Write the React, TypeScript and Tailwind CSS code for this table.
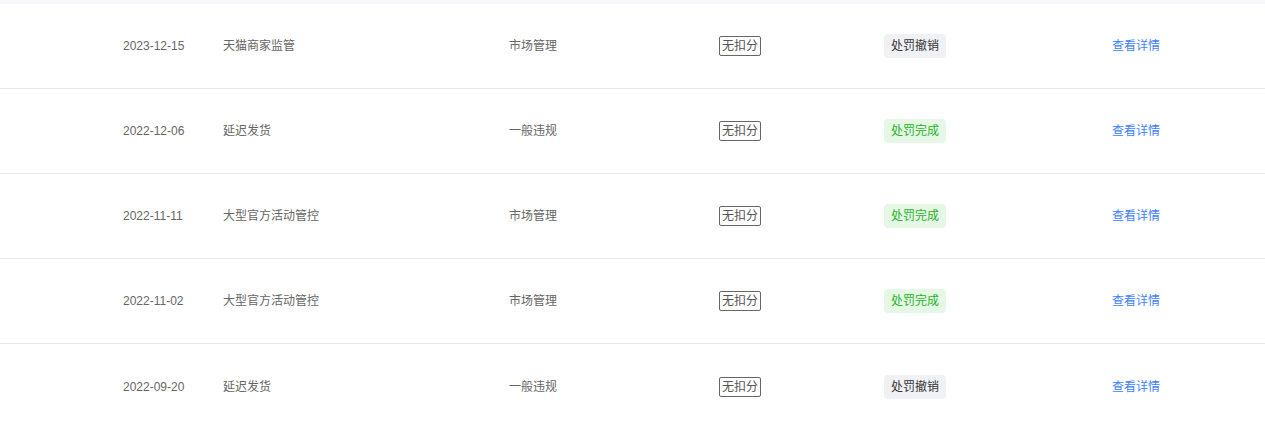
import React from "react";

type Row = { date: string; name: string; cat: string; status: "revoked" | "done" };

const rows: Row[] = [
  { date: "2023-12-15", name: "天猫商家监管", cat: "市场管理", status: "revoked" },
  { date: "2022-12-06", name: "延迟发货", cat: "一般违规", status: "done" },
  { date: "2022-11-11", name: "大型官方活动管控", cat: "市场管理", status: "done" },
  { date: "2022-11-02", name: "大型官方活动管控", cat: "市场管理", status: "done" },
  { date: "2022-09-20", name: "延迟发货", cat: "一般违规", status: "revoked" },
];

export default function App() {
  return (
    <div
      className="w-[1265px] h-[428px] bg-white overflow-hidden text-[12px] text-[#666]"
      style={{ fontFamily: '"Liberation Sans", "Noto Sans CJK SC", sans-serif' }}
    >
      <div className="h-[4px] bg-[#f6f7f9]" />
      {rows.map((r, i) => (
        <div
          key={i}
          className={`flex items-center h-[85px] pl-[123px] ${i < rows.length - 1 ? "border-b border-[#e8e8e8]" : ""}`}
        >
          <div className="w-[100px] shrink-0">{r.date}</div>
          <div className="w-[286px] shrink-0">{r.name}</div>
          <div className="w-[210px] shrink-0">{r.cat}</div>
          <div className="w-[165px] shrink-0">
            <span className="inline-flex items-center justify-center w-[42px] h-[20px] border border-[#666] rounded-[2px] text-[#555] leading-none">
              无扣分
            </span>
          </div>
          <div className="w-[228px] shrink-0">
            {r.status === "revoked" ? (
              <span className="inline-flex items-center justify-center w-[62px] h-[24px] rounded-[4px] bg-[#f0f1f5] text-[#333]">
                处罚撤销
              </span>
            ) : (
              <span className="inline-flex items-center justify-center w-[62px] h-[24px] rounded-[4px] bg-[#e5f8e5] text-[#27b327]">
                处罚完成
              </span>
            )}
          </div>
          <div className="text-[#3d7fff] cursor-pointer">查看详情</div>
        </div>
      ))}
    </div>
  );
}
